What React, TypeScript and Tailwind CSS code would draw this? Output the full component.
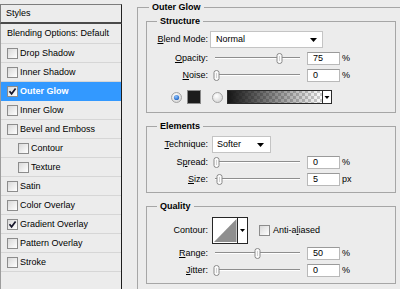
import React from "react";

const Check = () => (
  <svg width="9" height="9" viewBox="0 0 9 9">
    <path d="M1.5 4.2 L3.6 6.8 L7.6 1.6" stroke="#15152a" strokeWidth="1.7" fill="none" />
  </svg>
);

function CheckBox({ checked }: { checked?: boolean }) {
  return (
    <span className="w-[11px] h-[11px] shrink-0 border border-[#8c8c8c] bg-gradient-to-br from-[#d9d9d9] to-white flex items-center justify-center">
      {checked && <Check />}
    </span>
  );
}

const Arrow = () => (
  <svg width="7" height="4" viewBox="0 0 7 4">
    <polygon points="0,0 7,0 3.5,4" fill="#000" />
  </svg>
);

function Slider({ pos }: { pos: number }) {
  return (
    <div className="relative w-[95px] h-[13px] shrink-0">
      <div className="absolute left-[5px] right-[5px] top-[5px] h-[2px] border-t border-t-[#8e8e8e] border-b border-b-white" />
      <span className="absolute top-[1px]" style={{ left: pos - 3 }}>
        <svg width="7" height="11" viewBox="0 0 7 11">
          <path d="M1 2.5 Q1 0.5 3.5 0.5 Q6 0.5 6 2.5 L6 8.5 Q6 10.5 3.5 10.5 Q1 10.5 1 8.5 Z" fill="#fbfbfb" stroke="#8a8a8a" />
          <line x1="3.5" y1="3" x2="3.5" y2="8" stroke="#d2d2d2" />
        </svg>
      </span>
    </div>
  );
}

function NumInput({ value }: { value: string }) {
  return (
    <div className="ml-[2px] w-[33px] h-[13px] shrink-0 bg-white border border-[#b9b9b9] border-t-[#9a9a9a] pl-[5px] leading-[11px]">
      {value}
    </div>
  );
}

function Radio({ on }: { on?: boolean }) {
  return (
    <svg width="11" height="11" viewBox="0 0 11 11" className="shrink-0">
      <defs>
        <radialGradient id={on ? "rOn" : "rOff"} cx="0.4" cy="0.35" r="0.7">
          <stop offset="0" stopColor="#ffffff" />
          <stop offset="1" stopColor="#d4d4d4" />
        </radialGradient>
        <radialGradient id="dot" cx="0.4" cy="0.35" r="0.7">
          <stop offset="0" stopColor="#8fc4ff" />
          <stop offset="1" stopColor="#1b5fc0" />
        </radialGradient>
      </defs>
      <circle cx="5.5" cy="5.5" r="5" fill={`url(#${on ? "rOn" : "rOff"})`} stroke="#a3a3a3" />
      {on && <circle cx="5.5" cy="5.5" r="2.6" fill="url(#dot)" />}
    </svg>
  );
}

type Item = { label: string; checked?: boolean; selected?: boolean; indent?: boolean };
const items: Item[] = [
  { label: "Drop Shadow" },
  { label: "Inner Shadow" },
  { label: "Outer Glow", checked: true, selected: true },
  { label: "Inner Glow" },
  { label: "Bevel and Emboss" },
  { label: "Contour", indent: true },
  { label: "Texture", indent: true },
  { label: "Satin" },
  { label: "Color Overlay" },
  { label: "Gradient Overlay", checked: true },
  { label: "Pattern Overlay" },
  { label: "Stroke" },
];

function Label({ children }: { children: React.ReactNode }) {
  return <span className="w-[61px] shrink-0 text-right whitespace-nowrap">{children}</span>;
}

export default function App() {
  return (
    <div className="w-[400px] h-[289px] overflow-hidden bg-[#ececec] flex text-[9px] text-black font-['Liberation_Sans',Arial,sans-serif] leading-[11px]">
      {/* Left styles list */}
      <div className="w-[122px] shrink-0 pt-[4px] flex flex-col">
        <div className="h-[20px] border border-[#7d7d7d] border-b-2 border-b-[#4a4a4a] border-r-[#222] flex items-center pl-[5px]">
          Styles
        </div>
        <div className="flex-1 border-l border-l-[#9c9c9c] border-r border-r-[#1e1e1e]">
          <div className="h-[20px] border-b border-b-[#d6d6d6] flex items-center pl-[6px] whitespace-nowrap">
            Blending Options: Default
          </div>
          {items.map((it) => (
            <div
              key={it.label}
              className={`h-[19px] border-b flex items-center gap-[2px] whitespace-nowrap ${
                it.indent ? "pl-[17px]" : "pl-[6px]"
              } ${it.selected ? "bg-[#3399ff] border-b-[#3399ff] text-white font-bold" : "border-b-[#d6d6d6]"}`}
            >
              <CheckBox checked={it.checked} />
              <span>{it.label}</span>
            </div>
          ))}
        </div>
      </div>

      {/* Right panel */}
      <div className="flex-1 min-w-0">
        <fieldset className="ml-[15px] mt-[2px] w-[290px] border border-[#a6a6a6] pb-[30px]">
          <legend className="ml-[11px] px-[3px] font-bold leading-[11px]">Outer Glow</legend>

          {/* Structure */}
          <fieldset className="ml-[8px] mt-[3px] w-[250px] border border-[#a6a6a6] pb-[8px]">
            <legend className="ml-[10px] px-[3px] font-bold leading-[11px]">Structure</legend>
            <div className="flex items-center mt-[4px] h-[17px]">
              <Label>
                <u>B</u>lend Mode:
              </Label>
              <div className="ml-[2px] w-[113px] h-[17px] bg-white border border-[#c4c4c4] flex items-center justify-between pl-[5px] pr-[5px]">
                <span>Normal</span>
                <Arrow />
              </div>
            </div>
            <div className="flex items-center mt-[4px] h-[13px]">
              <Label>
                <u>O</u>pacity:
              </Label>
              <div className="ml-[2px]">
                <Slider pos={69} />
              </div>
              <NumInput value="75" />
              <span className="ml-[2px]">%</span>
            </div>
            <div className="flex items-center mt-[4px] h-[13px]">
              <Label>
                <u>N</u>oise:
              </Label>
              <div className="ml-[2px]">
                <Slider pos={6} />
              </div>
              <NumInput value="0" />
              <span className="ml-[2px]">%</span>
            </div>
            <div className="flex items-center mt-[8px] h-[14px]">
              <span className="ml-[24px]">
                <Radio on />
              </span>
              <span className="ml-[5px] w-[14px] h-[14px] bg-[#1c1c1c] border border-[#8a8a8a]" />
              <span className="ml-[11px]">
                <Radio />
              </span>
              <span className="ml-[4px]">
                <svg width="105" height="14" viewBox="0 0 105 14">
                  <defs>
                    <pattern id="chk" width="6" height="6" patternUnits="userSpaceOnUse">
                      <rect width="6" height="6" fill="#ffffff" />
                      <rect width="3" height="3" fill="#cdcdcd" />
                      <rect x="3" y="3" width="3" height="3" fill="#cdcdcd" />
                    </pattern>
                    <linearGradient id="gfade" x1="0" x2="1" y1="0" y2="0">
                      <stop offset="0" stopColor="#161616" stopOpacity="1" />
                      <stop offset="1" stopColor="#161616" stopOpacity="0" />
                    </linearGradient>
                  </defs>
                  <rect x="0.5" y="0.5" width="104" height="13" fill="#fff" stroke="#2a2a2a" />
                  <rect x="1" y="1" width="94" height="12" fill="url(#chk)" />
                  <rect x="1" y="1" width="94" height="12" fill="url(#gfade)" />
                  <line x1="95.5" y1="1" x2="95.5" y2="13" stroke="#2a2a2a" />
                  <polygon points="97.5,6 102.5,6 100,9" fill="#000" />
                </svg>
              </span>
            </div>
          </fieldset>

          {/* Elements */}
          <fieldset className="ml-[8px] mt-[8px] w-[250px] border border-[#a6a6a6] pb-[6px]">
            <legend className="ml-[10px] px-[3px] font-bold leading-[11px]">Elements</legend>
            <div className="flex items-center mt-[4px] h-[17px]">
              <Label>
                <u>T</u>echnique:
              </Label>
              <div className="ml-[4px] w-[59px] h-[17px] bg-white border border-[#c4c4c4] flex items-center justify-between pl-[4px] pr-[6px]">
                <span>Softer</span>
                <Arrow />
              </div>
            </div>
            <div className="flex items-center mt-[3px] h-[13px]">
              <Label>
                S<u>p</u>read:
              </Label>
              <div className="ml-[2px]">
                <Slider pos={6} />
              </div>
              <NumInput value="0" />
              <span className="ml-[2px]">%</span>
            </div>
            <div className="flex items-center mt-[4px] h-[13px]">
              <Label>
                <u>S</u>ize:
              </Label>
              <div className="ml-[2px]">
                <Slider pos={9} />
              </div>
              <NumInput value="5" />
              <span className="ml-[2px]">px</span>
            </div>
          </fieldset>

          {/* Quality */}
          <fieldset className="ml-[8px] mt-[8px] w-[250px] border border-[#a6a6a6] pb-[6px]">
            <legend className="ml-[10px] px-[3px] font-bold leading-[11px]">Quality</legend>
            <div className="flex items-center mt-[5px] h-[26px]">
              <Label>Contour:</Label>
              <span className="ml-[4px]">
                <svg width="36" height="27" viewBox="0 0 36 27">
                  <rect x="0.5" y="0.5" width="35" height="26" fill="#fff" stroke="#262626" />
                  <polygon points="2,25 24.5,2 24.5,25" fill="#8f8f8f" />
                  <line x1="25.5" y1="1" x2="25.5" y2="26" stroke="#262626" />
                  <polygon points="28,12 33,12 30.5,15" fill="#000" />
                </svg>
              </span>
              <span className="ml-[11px]">
                <CheckBox />
              </span>
              <span className="ml-[3px]">
                Anti-a<u>l</u>iased
              </span>
            </div>
            <div className="flex items-center mt-[4px] h-[13px]">
              <Label>
                <u>R</u>ange:
              </Label>
              <div className="ml-[2px]">
                <Slider pos={47} />
              </div>
              <NumInput value="50" />
              <span className="ml-[2px]">%</span>
            </div>
            <div className="flex items-center mt-[4px] h-[13px]">
              <Label>
                <u>J</u>itter:
              </Label>
              <div className="ml-[2px]">
                <Slider pos={6} />
              </div>
              <NumInput value="0" />
              <span className="ml-[2px]">%</span>
            </div>
          </fieldset>
        </fieldset>
      </div>
    </div>
  );
}
